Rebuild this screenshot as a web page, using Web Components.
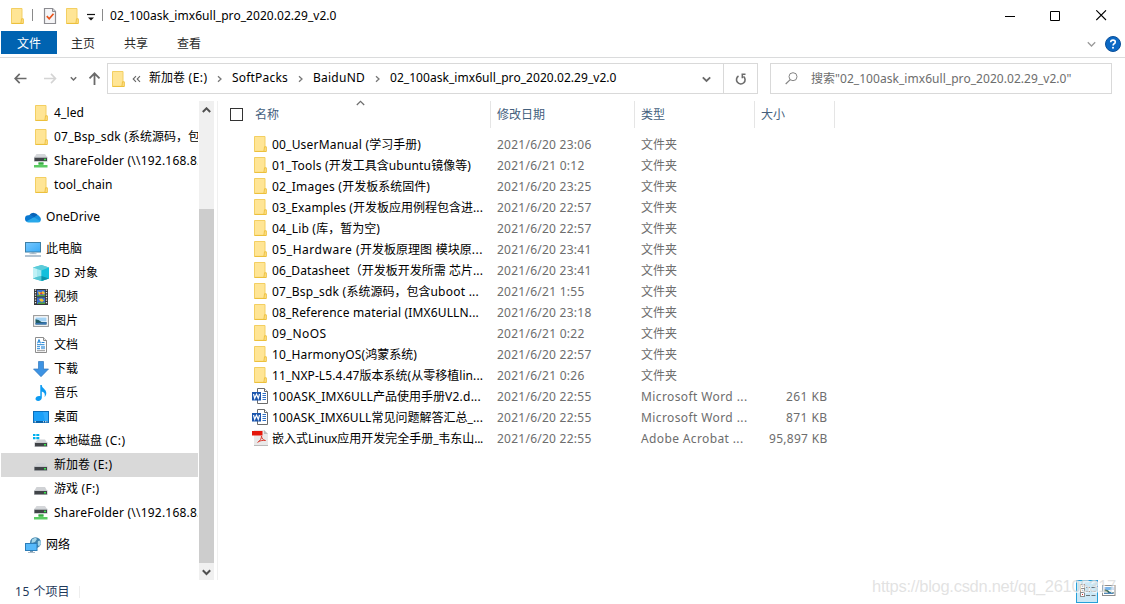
<!DOCTYPE html>
<html lang="zh-CN">
<head>
<meta charset="utf-8">
<title>02_100ask_imx6ull_pro_2020.02.29_v2.0</title>
<style>
html,body{margin:0;height:100%;overflow:hidden;background:#fff}
body{font:12px/16px "Noto Sans","Noto Sans CJK SC",sans-serif;color:#000}
</style>
</head>
<body>
<explorer-window></explorer-window>
<script>
const ICONS = {
folder:`<path d="M1.500.5h10v10l2 1v4h-12z" fill="#ffe595"/><path d="M1.500.5h10.500v14.800h-10.500z" fill="#ffe595" stroke="#f3cf62"/><path d="M11.500 10.800h1.800v4.700h-2.400z" fill="#ffe08a" stroke="#ecc03c" stroke-width=".9"/><path d="M1.500 15.500h11.500" stroke="#ecc03c"/>`,
netdrive:`<path d="M3.500 1h8.500l2 3H1.500z" fill="#d5d7da"/><path d="M1 3.800h13.500V8.800H1z" fill="#c2c5c9"/><path d="M1.500 4.800h12.500v3.200H1.500z" fill="#414448"/><rect x="11" y="5.700" width="2" height="1.500" fill="#38e54c"/><path d="M5.500 9.500h5V12h4v2.500H1V12h4.500z" fill="#5bcb62"/><path d="M5.500 9.500h5v1.200h-5z" fill="#2f9c3c"/>`,
drive:`<path d="M3.500 6h8.500l2 3.500H1.500z" fill="#d0d2d5"/><path d="M1 9.300h13.500V14H1z" fill="#b9bcc0"/><path d="M1.500 10h12.500v3.300H1.500z" fill="#414448"/><rect x="11" y="11" width="2" height="1.500" fill="#38e54c"/>`,
sysdrive:`<path d="M4.500 6.500h7.500l2 3H2z" fill="#d0d2d5"/><path d="M1.500 9.300h13V14h-13z" fill="#b9bcc0"/><path d="M2 10h12v3.300H2z" fill="#414448"/><rect x="11" y="11" width="2" height="1.500" fill="#38e54c"/><path d="M0 1h2.500v2H0zM3.300 1h3v2h-3zM0 4h2.500v2.300H0zM3.300 4h3v2.300h-3z" fill="#00b0ee"/>`,
cloud:`<path d="M4.500 6A5 5 0 0 1 13 6.500L9 10z" fill="#0864b8"/><path d="M3.200 13A3.300 3.300 0 0 1 3.500 6.300Q6 5.500 9 8l-4 5z" fill="#0a78d0"/><path d="M9 8.500Q13 4.500 14.500 7.500 16.600 9 15.500 12l-3 1z" fill="#1490df"/><path d="M1.500 12.200L9 8.300l6.500 3.900Q14.700 13.500 13 13.500H3.500Q2 13.500 1.500 12.200z" fill="#28a8ea"/>`,
pc:`<defs><linearGradient id="g" x2="1" y2="1"><stop stop-color="#76c8ff"/><stop offset="1" stop-color="#39aaf7"/></linearGradient></defs><rect x=".5" y="1.500" width="15" height="9.500" fill="url(#g)" stroke="#3d7fa6"/><path d="M6.500 11.500h3v1.200h-3z" fill="#7c9aaf"/><path d="M4.500 12.700h7" stroke="#a9bccb"/><path d="M0 15h16" stroke="#8aa2b8" stroke-width="1.300"/>`,
cube:`<path d="M8.500 0L16 2.500v11L8.500 16 0 13.500v-11z" fill="#4fc9d8"/><path d="M8.500 0L16 2.500l-7.500 3L0 2.500z" fill="#5ccbd9"/><path d="M0 2.500l4 1.400v8.200l-4 1.400z" fill="#bff1f6"/><path d="M4 3.900l4.500 1.600v5.500L4 12.100z" fill="#a2e8f0"/><path d="M0 13.500l4-1.400 4.500-1.100v5z" fill="#52c5d3"/><path d="M8.500 5.500L16 2.500v11L8.500 16z" fill="#12c0dc"/><path d="M8.500 11L16 13.500 8.500 16z" fill="#0d93a8"/>`,
video:`<rect x="1" width="14" height="16" fill="#343638"/><path d="M2.500 .5v15M13.500 .5v15" stroke="#e8e8e8" stroke-width="1.300" stroke-dasharray="1.300 1.200"/><rect x="4" y="1" width="8" height="6.300" fill="#3a70cf"/><rect x="4" y="8.500" width="8" height="6.500" fill="#3a70cf"/><path d="M5 2.500l3 1 2-1.500 2 2-1 1.500-3-.5-2 1z" fill="#f4c132"/><path d="M7 4l2-.8.500 2h-2z" fill="#d8412f"/><path d="M4 6h8v1.300H4zM5 13.500h7V15H5z" fill="#51a33c"/><path d="M6 10l3-.5 2 2-2 1.500-2-1z" fill="#f4c132"/>`,
picture:`<rect x=".6" y="2.600" width="14.800" height="10.800" fill="#fff" stroke="#9a9a9a" stroke-width="1.100"/><path d="M2.500 4.500h11v4h-11z" fill="#a4d3f4"/><path d="M2.500 6.200q3 0 6 2.800h5v2.500h-11z" fill="#1f5b62"/><path d="M2.500 10q5 0 11-1v2.500h-11z" fill="#3b76b4"/>`,
doc:`<path d="M2.500.5h8l3 3v12h-11z" fill="#fff" stroke="#8d8d8d"/><path d="M10.500.5v3h3" fill="#e8e8e8" stroke="#8d8d8d"/><path d="M4.500 6.300L6 2.500l1.500 3.800M5 5h2" stroke="#2487d8" fill="none"/><path d="M8.500 5.500h3M4 7.700h7.500M4 9.700h3M4 11.700h3" stroke="#2487d8"/><path d="M8 9.700h4M8 11.700h4M4 13.700h8" stroke="#7a7a7a" stroke-width=".8"/><rect x="8" y="9" width="4" height="3" fill="#7fb8e8"/>`,
down:`<path d="M5.500.5h5v7.500h5L8 15.700.5 8h5z" fill="#3d93e3" stroke="#2f77bd" stroke-width=".7"/>`,
music:`<path d="M7.300 0h1.500c0 3.500 4.500 4 4.500 8 0 1.700-.8 3-1.700 4 .8-3-.3-5-2.800-5.500v6.300c0 2-1.700 3.200-3.700 3.200-1.600 0-2.600-.9-2.600-2.200 0-1.900 2.300-3.200 4.800-2.600z" fill="#0c9bf2"/>`,
desktop:`<rect x=".5" y="2.500" width="15" height="11" fill="#1ba0f8" stroke="#0b6db9"/><path d="M10 3h5v9h-3z" fill="#47b5ff" opacity=".5"/><path d="M1 12.700h14" stroke="#0b5b9c" stroke-width="1.300"/><path d="M1.500 12.800h1.500M10 12.800h1M12 12.800h1M13.500 12.800h1" stroke="#fff" stroke-width="1"/>`,
network:`<circle cx="10.500" cy="5.700" r="5.500" fill="#3e83ad"/><path d="M7 2.500l3.500-2L12 2l-2 3-3.500 1zM13 4l2.500-.5.500 3-2 3-1.500-2z" fill="#a5d5e8"/><rect x=".5" y="6.500" width="11.500" height="7" fill="#56b9fa" stroke="#2c7db8"/><path d="M5 14h3v1H5z" fill="#7c9aaf"/><path d="M3 15.500h7" stroke="#a7bac8"/>`,
word:`<path d="M5.500.5h7l3 3v12h-10z" fill="#fff" stroke="#6b6b6b"/><path d="M12.500.5v3h3" fill="#fff" stroke="#6b6b6b"/><path d="M10.500 5.500h3.500M10.500 7.500h3.500M10.500 9.500h3.500M10.500 11.500h3.500" stroke="#2f6fc4"/><rect y="4" width="9" height="8.500" fill="#1c56ad"/><path d="M1.500 6l1.200 4.300 1.800-4 1.800 4L7.500 6" fill="none" stroke="#fff" stroke-width="1.200"/>`,
pdf:`<path d="M2 0h10l4 4v12H2z" fill="#e9e9e9"/><path d="M12 0v4h4z" fill="#bdbdbd"/><path d="M2 15.500h14" stroke="#bbb"/><path d="M0 1h10.500v4.500H0z" fill="#e4180c"/><path d="M5.500 12.500c2.500-1.500 4.200-4 4-6.500.3 2.500 1.500 4.200 4 4.500-2.500-.4-5 .2-7 1" fill="none" stroke="#dc3c30" stroke-width="1"/>`,
props:`<path d="M2.500 .5h8l3 3v12h-11z" fill="#f5f5f7" stroke="#8b8b90" stroke-width="1.200"/><path d="M10.500.5v3h3" fill="#ddd" stroke="#8b8b90"/><path d="M4.800 8.200l2.400 2.600 4.300-5" fill="none" stroke="#e8541c" stroke-width="1.700"/>`,
custom:`<path d="M0 3.500h8" stroke="#111" stroke-width="1.200"/><path d="M1 6.500h6L4 9.500z" fill="#111"/>`,
min:`<path d="M0 5.500h10" stroke="#000"/>`,
max:`<path d="M.5.500h9v9h-9z" fill="none" stroke="#000"/>`,
close:`<path d="M.3.300l9.700 9.700M10 .3L.3 10" fill="none" stroke="#000" stroke-width="1.100"/>`,
chevD:`<path d="M.8 1.300L4.500 5 8.200 1.300" fill="none" stroke="currentColor" stroke-width="var(--sw,1.300)"/>`,
chevS:`<path d="M.8 1.300L3.500 4 6.200 1.300" fill="none" stroke="currentColor" stroke-width="1.500"/>`,
chevU:`<path d="M.8 5L4.500 1.300 8.200 5" fill="none" stroke="currentColor" stroke-width="var(--sw,1.300)"/>`,
chevR:`<path d="M1 1.200l3 2.800-3 2.800" fill="none" stroke="#777" stroke-width="1.300"/>`,
back:`<path d="M1 6.500h11.500M5.700 1.900L1.200 6.500 5.700 11.100" fill="none" stroke="currentColor" stroke-width="1.700"/>`,
fwd:`<path d="M0 6.500h11.500M7 1.900l4.500 4.600L7 11.100" fill="none" stroke="currentColor" stroke-width="1.600"/>`,
up:`<path d="M6.500 13V1.500M1.500 6.300l5-5 5 5" fill="none" stroke="currentColor" stroke-width="1.800"/>`,
dbl:`<path d="M4 1.200L1.200 4 4 6.800M8 1.200L5.200 4 8 6.800" fill="none" stroke="#666" stroke-width="1.100"/>`,
refresh:`<path d="M8.500 3.300A4.300 4.300 0 1 1 3.500 3" fill="none" stroke="#6c6c6c" stroke-width="1.600"/><path d="M6.500 1.200h4M7.300 .8v4.500" fill="none" stroke="#6c6c6c" stroke-width="1.500" transform="rotate(0)"/>`,
search:`<circle cx="8" cy="4.700" r="4" fill="none" stroke="#858585"/><path d="M5.200 7.600L.7 12" stroke="#858585" stroke-width="1.200"/>`,
help:`<circle cx="8" cy="8" r="7.500" fill="#0b68c4" stroke="#0a4f99"/><path d="M5.700 6.300q0-2.200 2.300-2.200t2.300 1.900q0 1.200-1.200 1.800-1 .6-1 1.700" fill="none" stroke="#fff" stroke-width="1.600"/><circle cx="8" cy="11.800" r="1" fill="#fff"/>`,
details:`<rect x="4.500" y="4.500" width="4" height="12" fill="#fff" stroke="#8c8c8c"/><path d="M4.500 8.500h4M4.500 12.500h4" stroke="#8c8c8c"/><path d="M6 6.500h1" stroke="#555"/><path d="M6 10.500h1" stroke="#3577c4"/><path d="M6 14.500h1" stroke="#d22"/><path d="M10 7.500h4M15.500 7.500h4M10 11.500h4M15.500 11.500h4M10 15.500h4M15.500 15.500h4" stroke="#6a7378"/>`,
large:`<rect x=".5" y=".5" width="12.500" height="10" fill="#fff" stroke="#8c8c8c"/><path d="M2 2h9.500v3H2z" fill="#79b5ea"/><path d="M2 4.500q4-.5 6 2.500h3.500v1.500H2z" fill="#2c6a5d"/><path d="M2 7.500h9.500v1.200H2z" fill="#3a78bd"/>`
};

class UiIcon extends HTMLElement {
  connectedCallback() {
    const w = this.getAttribute('w') || 16, h = this.getAttribute('h') || 16;
    this.attachShadow({mode:'open'}).innerHTML =
      `<style>:host{display:block;flex:none;width:${w}px;height:${h}px}svg{display:block}</style>
       <svg width="${w}" height="${h}" viewBox="0 0 ${w} ${h}">${ICONS[this.getAttribute('name')]}</svg>`;
  }
}

/* A label whose Latin runs are tracked so that the line takes the given width; CJK glyphs keep their own. */
class UiLabel extends HTMLElement {
  connectedCallback() {
    const text = this.getAttribute('text'), w = +this.getAttribute('w');
    const root = this.attachShadow({mode:'open'});
    root.innerHTML = `<style>:host{display:block;white-space:pre;flex:none}</style><span class="all"></span>`;
    const all = root.querySelector('.all');
    let latin = 0;
    for (const run of text.match(/[\x00-\x7f]+|[^\x00-\x7f]+/g)) {
      const s = document.createElement('span');
      s.textContent = run;
      if (run.charCodeAt(0) < 128) { s.className = 'l'; latin += run.length; }
      all.append(s);
    }
    if (w && latin) {
      const gap = (w - all.getBoundingClientRect().width) / latin;
      root.querySelectorAll('.l').forEach(s => s.style.letterSpacing = gap.toFixed(3) + 'px');
    }
  }
}
const L = (t, w = 0) => `<ui-label text='${t}' w="${w}"></ui-label>`;
const I = (n, w = 16, h = 16, c = '') => `<ui-icon name="${n}" w="${w}" h="${h}" class="${c}"></ui-icon>`;

class TitleBar extends HTMLElement {
  connectedCallback() {
    this.attachShadow({mode:'open'}).innerHTML = `<style>
      :host{display:flex;height:31px;box-sizing:border-box;padding-left:10px;align-items:center}
      i{width:1px;height:12px;background:#8a8a8a;margin-top:-1px}
      .btn{width:45px;display:flex;justify-content:center}
      .t{padding-left:7px}
      .sp{flex:1}
    </style>
    ${I('folder')}<i style="margin-left:6px"></i>
    <div style="padding-left:9px">${I('props')}</div>
    <div style="padding-left:7px">${I('folder')}</div>
    <div style="padding:3px 7px 0 6px">${I('custom',8,12)}</div><i></i>
    <div class="t">${L('02_100ask_imx6ull_pro_2020.02.29_v2.0',226.5)}</div><div class="sp"></div>
    <div class="btn">${I('min',10,10)}</div><div class="btn">${I('max',10,10)}</div><div class="btn" style="padding-right:1px;padding-left:2px">${I('close',11,11)}</div>`;
  }
}

class RibbonTabs extends HTMLElement {
  connectedCallback() {
    this.attachShadow({mode:'open'}).innerHTML = `<style>
      :host{display:flex;height:27px;box-sizing:border-box;border-bottom:1px solid #dadbdc;padding-left:1px;line-height:23px;color:#2b2b2b}
      .tab{width:53px;height:23px;padding-top:1px;box-sizing:border-box;display:flex;justify-content:center}
      .file{width:56px;background:#0063b1;color:#fff;margin-right:-.4px}
      .sp{flex:1}
      .chev{color:#9a9a9a;padding:10px 9px 0 0}
      .help{padding:5px 4px 0 0}
    </style>
    <div class="tab file">${L('文件')}</div><div class="tab">${L('主页')}</div><div class="tab">${L('共享')}</div><div class="tab">${L('查看')}</div>
    <div class="sp"></div><div class="chev">${I('chevD',9,7)}</div><div class="help">${I('help')}</div>`;
  }
}

class AddressBar extends HTMLElement {
  connectedCallback() {
    this.attachShadow({mode:'open'}).innerHTML = `<style>
      :host{display:flex;height:43px;box-sizing:border-box;padding:5px 13px 7px 13px;line-height:29px}
      .nav{display:flex;align-items:center;width:94px;color:#6a6a6a}
      .box{display:flex;align-items:center;box-sizing:border-box;height:31px;border:1px solid #d9d9d9}
      .path{width:651px;padding-left:3px}
      .ref{width:34px;height:29px;box-sizing:border-box;border-left:1px solid #d9d9d9;display:flex;align-items:center;justify-content:center}
      .find{margin-left:12px;flex:1;padding-left:14px;color:#6d6d6d}
      .crumb{margin-top:-2px}
    </style>
    <div class="nav"><div style="margin-left:.5px">${I('back',14,13)}</div><div style="color:#d4d4d4;margin-left:16.500px">${I('fwd',13,13)}</div><div style="margin-left:13px">${I('chevS',7,6)}</div><div style="margin-left:11px">${I('up',13,14)}</div></div>
    <div class="box path">${I('folder')}
      <div style="margin-left:5px">${I('dbl',9,8)}</div>
      <div class="crumb" style="margin-left:8px;width:68px">${L('新加卷 (E:)',58.5)}</div>${I('chevR',5,8)}
      <div class="crumb" style="margin-left:10px;width:66px">${L('SoftPacks',56)}</div>${I('chevR',5,8)}
      <div class="crumb" style="margin-left:10px;width:62px">${L('BaiduND',52)}</div>${I('chevR',5,8)}
      <div class="crumb" style="margin-left:10px;flex:1">${L('02_100ask_imx6ull_pro_2020.02.29_v2.0',226.5)}</div>
      <div style="color:#6a6a6a;--sw:1.800;padding:1px 12px 0 0">${I('chevD',9,7)}</div>
      <div class="ref">${I('refresh',11,12)}</div></div>
    <div class="box find">${I('search',13,13)}<div style="padding-left:13px">${L('搜索"02_100ask_imx6ull_pro_2020.02.29_v2.0"',260.5)}</div></div>`;
  }
}

class TreeItem extends HTMLElement {
  connectedCallback() {
    const top = this.hasAttribute('top'), folder = this.getAttribute('icon') === 'folder';
    this.attachShadow({mode:'open'}).innerHTML = `<style>
      :host{display:flex;height:24px;line-height:24px;align-items:center;box-sizing:border-box;padding-left:${top?24:32}px;overflow:hidden}
      :host([selected]){background:#d9d9d9}
      :host([top]){margin-top:8px}
      .i{padding-left:${folder?1:0}px}
      .t{margin-left:${folder?4:5}px;height:24px}
    </style><div class="i">${I(this.getAttribute('icon'))}</div><div class="t">${L(this.getAttribute('text'), this.getAttribute('w'))}</div>`;
  }
}

class NavTree extends HTMLElement {
  connectedCallback() {
    const rows = [['folder','4_led',30],['folder','07_Bsp_sdk (系统源码，包',146],['netdrive','ShareFolder (\\\\192.168.8.',146.5],['folder','tool_chain',58.5],
      ['cloud','OneDrive',54,'top'],['pc','此电脑',0,'top'],['cube','3D 对象',44],['video','视频'],['picture','图片'],['doc','文档'],['down','下载'],['music','音乐'],['desktop','桌面'],
      ['sysdrive','本地磁盘 (C:)',71.5],['drive','新加卷 (E:)',58.5,'selected'],['drive','游戏 (F:)',45.5],['netdrive','ShareFolder (\\\\192.168.8.',146.5],['network','网络',0,'top']];
    this.attachShadow({mode:'open'}).innerHTML = `<style>
      :host{display:flex;width:218px;box-sizing:border-box;border-right:1px solid #f0f0f0}
      .list{width:197px;margin-left:1px;overflow:hidden}
      .bar{width:15px;margin-left:1px;background:#f0f0f0;display:flex;flex-direction:column;align-items:center;color:#505050;--sw:2}
      .thumb{align-self:stretch;height:354px;background:#cdcdcd}
      .u{height:108px;padding-top:6px;box-sizing:border-box}.d{padding-top:6px}
    </style>
    <div class="list">${rows.map(([i,t,w=0,f=''])=>`<tree-item icon="${i}" text="${t}" w="${w}" ${f}></tree-item>`).join('')}</div>
    <div class="bar"><div class="u">${I('chevU',9,7)}</div><div class="thumb"></div><div class="d">${I('chevD',9,7)}</div></div>`;
  }
}

class FileRow extends HTMLElement {
  connectedCallback() {
    const a = n => this.getAttribute(n);
    const n = a('icon'), f = n === 'folder';
    this.attachShadow({mode:'open'}).innerHTML = `<style>
      :host{display:grid;grid-template-columns:18px 227px 144px 114px 72.500px;height:21px;line-height:21px;padding-left:34px;color:#6d6d6d}
      .n{color:#000;padding-left:2px}.s{display:flex;justify-content:flex-end}
      .i{padding:2px 0 0 ${f?1:0}px}
    </style><div class="i">${I(n)}</div><div class="n">${L(a('text'),a('w'))}</div><div class="d">${L(a('date'),a('dw'))}</div><div>${L(a('kind'),a('kw'))}</div><div class="s">${a('size')?L(a('size'),a('sw')):''}</div>`;
  }
}

class FileList extends HTMLElement {
  connectedCallback() {
    const F='folder', K='文件夹', D='2021/6/';
    const rows=[[F,'00_UserManual (学习手册)',149,'20 23:06',K],[F,'01_Tools (开发工具含ubuntu镜像等)',199,'21 0:12',K],[F,'02_Images (开发板系统固件)',158,'20 23:25',K],
      [F,'03_Examples (开发板应用例程包含进...',211,'20 22:57',K],[F,'04_Lib (库，暂为空)',108,'20 22:57',K],[F,'05_Hardware (开发板原理图 模块原...',211,'20 23:41',K],
      [F,'06_Datasheet（开发板开发所需 芯片...',211,'20 23:41',K],[F,'07_Bsp_sdk (系统源码，包含uboot ...',207,'21 1:55',K],[F,'08_Reference material (IMX6ULLN...',207,'20 23:18',K],
      [F,'09_NoOS',54.5,'21 0:22',K],[F,'10_HarmonyOS(鸿蒙系统)',145,'20 22:57',K],[F,'11_NXP-L5.4.47版本系统(从零移植lin...',211,'21 0:26',K],
      ['word','100ASK_IMX6ULL产品使用手册V2.d...',209,'20 22:55','Microsoft Word ...','261 KB'],
      ['word','100ASK_IMX6ULL常见问题解答汇总_...',211,'20 22:55','Microsoft Word ...','871 KB'],
      ['pdf','嵌入式Linux应用开发完全手册_韦东山...',211,'20 22:55','Adobe Acrobat ...','95,897 KB']];
    this.attachShadow({mode:'open'}).innerHTML = `<style>
      :host{display:block;flex:1;position:relative}
      .head{display:flex;height:27px;line-height:27px;color:#44607d;margin-bottom:6px}
      .h{box-sizing:border-box;border-right:1px solid #e5e5e5;padding-left:6px}
      .box{width:11px;height:11px;border:1px solid #333;margin:7px 12px 0 12px;flex:none}
      .name{display:flex;width:273px;padding-left:0}
      .sort{position:absolute;left:138px;top:-1px;color:#6d6d6d;--sw:1.200}
    </style>
    <div class="head"><div class="h name"><div class="box"></div>${L('名称')}</div><div class="h" style="width:144px">${L('修改日期')}</div><div class="h" style="width:120px">${L('类型')}</div><div class="h" style="width:80px">${L('大小')}</div></div>
    <div class="sort">${I('chevU',9,7)}</div>
    ${rows.map(([i,t,w,d,k,s])=>`<file-row icon="${i}" text="${t}" w="${w}" date="${D+d}" dw="${d.length===8?94.5:87.5}" kind="${k}" kw="${k[0]==='M'?106.5:k[0]==='A'?102.5:0}" ${s?`size="${s}" sw="${s.length>6?58.5:41.5}"`:''}></file-row>`).join('')}`;
  }
}

class StatusBar extends HTMLElement {
  connectedCallback() {
    this.attachShadow({mode:'open'}).innerHTML = `<style>
      :host{display:flex;height:24px;line-height:23px;padding:0 8px 0 15px;color:#1e395b;position:relative}
      .sep{width:1px;height:12px;background:#eee;margin:6px 0 0 9.500px}
      .sp{flex:1}
      .on{box-sizing:border-box;width:22px;height:23px;border:1px solid #26a0da;background:#cbe8f6}
      .on ui-icon{margin:-1px}
      .wm{position:absolute;left:872px;top:-4px;font:16.500px/20px "Liberation Sans",Arial,sans-serif;color:rgba(215,215,215,.72);text-shadow:1px 1px 0 rgba(255,255,255,.7)}
    </style>
    ${L('15 个项目',54.5)}<div class="sep"></div><div class="sp"></div>
    <div class="on">${I('details',22,23)}</div><div style="padding:5px 0 0 4px">${I('large',15,11)}</div>
    <div class="wm">${L('https://blog.csdn.net/qq_26105317',244)}</div>`;
  }
}

class ExplorerWindow extends HTMLElement {
  connectedCallback() {
    this.attachShadow({mode:'open'}).innerHTML = `<style>
      :host{display:flex;flex-direction:column;width:1125px;height:604px;background:#fff}
      .main{display:flex;height:479px}
    </style><title-bar></title-bar><ribbon-tabs></ribbon-tabs><address-bar></address-bar>
    <div class="main"><nav-tree></nav-tree><file-list></file-list></div><status-bar></status-bar>`;
  }
}
for (const [n,c] of [['ui-icon',UiIcon],['ui-label',UiLabel],['title-bar',TitleBar],['ribbon-tabs',RibbonTabs],['address-bar',AddressBar],['tree-item',TreeItem],['nav-tree',NavTree],['file-row',FileRow],['file-list',FileList],['status-bar',StatusBar],['explorer-window',ExplorerWindow]]) customElements.define(n,c);
</script>
</body>
</html>
